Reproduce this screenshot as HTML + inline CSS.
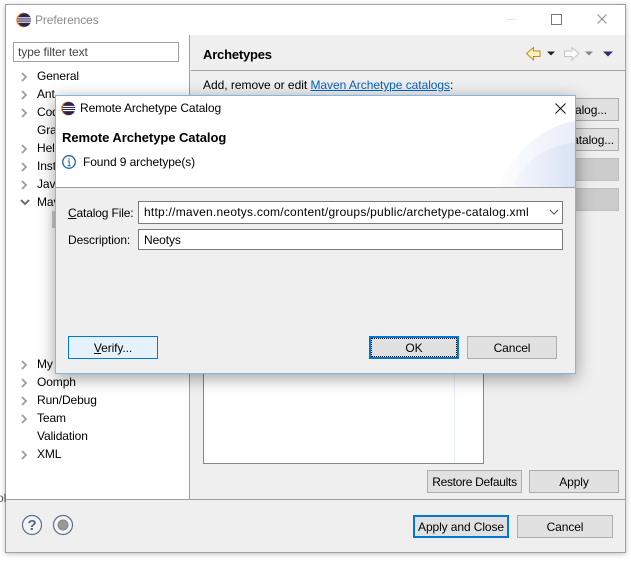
<!DOCTYPE html>
<html><head><meta charset="utf-8"><style>
html,body{margin:0;padding:0;background:#fff}
#r{position:relative;width:631px;height:562px;overflow:hidden;background:#fff;font:12px/16px "Liberation Sans",sans-serif;color:#000;letter-spacing:-.1px}
#r div,#r svg,#r span.a{position:absolute}
.t{white-space:nowrap}
.b{box-sizing:border-box;background:#e1e1e1;border:1px solid #adadad;text-align:center;white-space:nowrap}
.f{box-sizing:border-box;background:#fff;border:1px solid #7a7a7a;white-space:nowrap}
u{text-underline-offset:1px}
</style></head><body><div id="r">
<div style="left:5px;top:4px;width:621px;height:549px;box-sizing:border-box;border:1px solid #a0a0a0;background:#fff;box-shadow:0 1px 5px rgba(0,0,0,.25)"></div>
<div class="t" style="left:-3px;top:490px;color:#555">ol</div>
<div style="left:6px;top:5px;width:619px;height:547px;background:#fff"></div>
<div style="left:190px;top:35px;width:435px;height:464px;background:#efefef"></div>
<div style="left:6px;top:500px;width:619px;height:52px;background:#efefef"></div>
<div style="left:6px;top:499px;width:619px;height:1px;background:#a0a0a0"></div>
<div style="left:189px;top:35px;width:1px;height:464px;background:#a0a0a0"></div>
<div style="left:191px;top:70px;width:434px;height:1px;background:#a0a0a0"></div>

<svg style="left:16px;top:12px" width="16" height="16" viewBox="0 0 16 16"><circle cx="7.500" cy="8" r="7.300" fill="#f7941e"/><circle cx="8.300" cy="8" r="6.800" fill="#2c2255"/><path d="M2 5.800h13M1.500 8h14M2 10.200h13" stroke="#fff" stroke-width="1.100"/></svg>
<div class="t" style="left:35px;top:12px;color:#8a8a8a">Preferences</div>
<div style="left:506px;top:19px;width:10px;height:1px;background:#e6e6e6"></div>
<div style="left:551px;top:14px;width:9px;height:9px;border:1px solid #777"></div>
<svg style="left:597px;top:14px" width="10" height="10" viewBox="0 0 10 10"><path d="M.5.500l9 9M9.500.500l-9 9" stroke="#8a8a8a" fill="none"/></svg>

<div class="f t" style="left:13px;top:42px;width:166px;height:20px;border-color:#a0a0a0;padding:1px 0 0 4px;color:#444">type filter text</div>

<div class="t" style="left:37px;top:68px">General</div>
<div class="t" style="left:37px;top:86px">Ant</div>
<div class="t" style="left:37px;top:104px">Code</div>
<div class="t" style="left:37px;top:122px">Gradle</div>
<div class="t" style="left:37px;top:140px">Help</div>
<div class="t" style="left:37px;top:158px">Install</div>
<div class="t" style="left:37px;top:176px">Java</div>
<div class="t" style="left:37px;top:194px">Maven</div>
<div style="left:52px;top:211px;width:40px;height:17px;background:#ccc"></div>
<div class="t" style="left:37px;top:356px">My</div>
<div class="t" style="left:37px;top:374px">Oomph</div>
<div class="t" style="left:37px;top:392px">Run/Debug</div>
<div class="t" style="left:37px;top:410px">Team</div>
<div class="t" style="left:37px;top:428px">Validation</div>
<div class="t" style="left:37px;top:446px">XML</div>
<svg style="left:18px;top:68px" width="14" height="400" fill="none" stroke="#a0a0a0" stroke-width="1.900"><path d="M4 5l4 4-4 4M4 23l4 4-4 4M4 41l4 4-4 4M4 77l4 4-4 4M4 95l4 4-4 4M4 113l4 4-4 4M4 293l4 4-4 4M4 311l4 4-4 4M4 329l4 4-4 4M4 347l4 4-4 4M4 383l4 4-4 4"/><path d="M3 132l4 4 4-4" stroke="#666"/></svg>

<div class="t" style="left:203px;top:47px;font-weight:bold;font-size:13px;letter-spacing:-.2px">Archetypes</div>
<div class="t" style="left:203px;top:77px;letter-spacing:-.03px">Add, remove or edit <span style="color:#0563c1;text-decoration:underline;letter-spacing:-.05px">Maven Archetype catalogs</span>:</div>
<svg style="left:525px;top:45px" width="95" height="18" viewBox="0 0 95 18"><path d="M1.500 8.500l7-6v3.500h6.500v5.500h-6.500v3.500z" fill="#fff0c0" stroke="#c88a1e"/><path d="M22 6.500h8l-4 4z" fill="#222"/><path d="M54 8.500l-7-6v3.500h-7.500v5.500h7.500v3.500z" fill="#fafafa" stroke="#c4c4c4"/><path d="M60 6.500h8l-4 4z" fill="#888"/><path d="M78 6.500h10l-5 5z" fill="#3b2a6b"/></svg>
<div class="b" style="left:500px;top:98px;width:119px;height:23px;line-height:22px;text-align:right;padding-right:11px">Local Catalog...</div>
<div class="b" style="left:500px;top:128px;width:119px;height:23px;line-height:22px;text-align:right;padding-right:4px">Remote Catalog...</div>
<div class="b" style="left:500px;top:158px;width:119px;height:23px;background:#ccc;border-color:#bfbfbf"></div>
<div class="b" style="left:500px;top:188px;width:119px;height:23px;background:#ccc;border-color:#bfbfbf"></div>
<div style="left:203px;top:360px;width:281px;height:104px;box-sizing:border-box;border:1px solid #828790;background:#fff"></div>
<div style="left:454px;top:374px;width:1px;height:88px;background:#e6edf7"></div>
<div class="b" style="left:427px;top:470px;width:95px;height:23px;line-height:23px;letter-spacing:-.3px">Restore Defaults</div>
<div class="b" style="left:529px;top:470px;width:90px;height:23px;line-height:23px">Apply</div>
<svg style="left:21px;top:514px" width="54" height="22" viewBox="0 0 54 22"><circle cx="11" cy="11" r="9.500" fill="#f4f4f4" stroke="#5a6f90" stroke-width="1.200"/><circle cx="42" cy="11" r="9.500" fill="#f4f4f4" stroke="#5a6f90" stroke-width="1.200"/><circle cx="42" cy="11" r="5" fill="#999" stroke="#888"/><text x="11" y="16" font-family="Liberation Sans" font-size="15" font-weight="bold" text-anchor="middle" fill="#4f6488">?</text></svg>
<div class="b" style="left:413px;top:515px;width:96px;height:23px;border:2px solid #0078d7;line-height:21px">Apply and Close</div>
<div class="b" style="left:517px;top:515px;width:96px;height:23px;line-height:23px">Cancel</div>

<!-- dialog -->
<div style="left:55px;top:95px;width:521px;height:279px;box-sizing:border-box;border:1px solid #86b5e4;background:#efefef;box-shadow:0 4px 16px rgba(0,0,0,.38)"></div>
<div style="left:56px;top:96px;width:519px;height:91px;background:#fff;overflow:hidden"></div>
<svg style="left:500px;top:118px" width="75" height="69" viewBox="0 0 75 69"><defs><linearGradient id="g" x1="0" y1="0" x2="1" y2="0"><stop offset="0" stop-color="#fcfdfe"/><stop offset="1" stop-color="#e8eef9"/></linearGradient><linearGradient id="h" x1="0" y1="0" x2="1" y2="0"><stop offset="0" stop-color="#f6f8fd"/><stop offset="1" stop-color="#d9e2f4"/></linearGradient></defs><path d="M0 69C8 40 40 8 75 3V69z" fill="url(#g)"/><path d="M12 69C22 45 45 28 75 24V69z" fill="url(#h)"/></svg>
<div style="left:56px;top:187px;width:519px;height:1px;background:#a0a0a0"></div>
<svg style="left:61px;top:101px" width="15" height="15" viewBox="0 0 16 16"><circle cx="7.500" cy="8" r="7.500" fill="#f7941e"/><circle cx="8.300" cy="8" r="7" fill="#2c2255"/><path d="M2 5.800h13M1.500 8h14M2 10.200h13" stroke="#fff" stroke-width="1.100"/></svg>
<div class="t" style="left:80px;top:100px">Remote Archetype Catalog</div>
<svg style="left:555px;top:103px" width="11" height="11" viewBox="0 0 11 11"><path d="M.5.500l10 10M10.500.500l-10 10" stroke="#111" fill="none"/></svg>
<div class="t" style="left:62px;top:130px;font-weight:bold;font-size:13px;letter-spacing:-.06px">Remote Archetype Catalog</div>
<svg style="left:62px;top:155px" width="14" height="14" viewBox="0 0 14 14"><circle cx="7" cy="7" r="6.300" fill="#fff" stroke="#1f659f" stroke-width="1.300"/><path d="M7 3v1.600M5.700 6h1.500v4.500M5.500 10.700h3.200" stroke="#1f659f" fill="none"/></svg>
<div class="t" style="left:83px;top:154px">Found 9 archetype(s)</div>

<div class="t" style="left:68px;top:205px;letter-spacing:-.15px"><u>C</u>atalog File:</div>
<div class="f" style="left:138px;top:201px;width:425px;height:23px;line-height:20px;padding-left:5px;letter-spacing:.24px">http://maven.neotys.com/content/groups/public/archetype-catalog.xml</div>
<svg style="left:549px;top:209px" width="10" height="7"><path d="M1 1l4 4 4-4" fill="none" stroke="#555"/></svg>
<div class="t" style="left:68px;top:232px">Description:</div>
<div class="f" style="left:138px;top:229px;width:425px;height:21px;line-height:21px;padding-left:5px">Neotys</div>

<div class="b" style="left:68px;top:336px;width:90px;height:23px;background:#e5f1fb;border-color:#0078d7;line-height:23px"><u>V</u>erify...</div>
<div class="b" style="left:369px;top:336px;width:90px;height:23px;border:2px solid #0078d7;line-height:21px"><div style="left:0;top:0;width:86px;height:19px;box-sizing:border-box;border:1px dotted #000"></div>OK</div>
<div class="b" style="left:467px;top:336px;width:90px;height:23px;line-height:23px">Cancel</div>
</div></body></html>
